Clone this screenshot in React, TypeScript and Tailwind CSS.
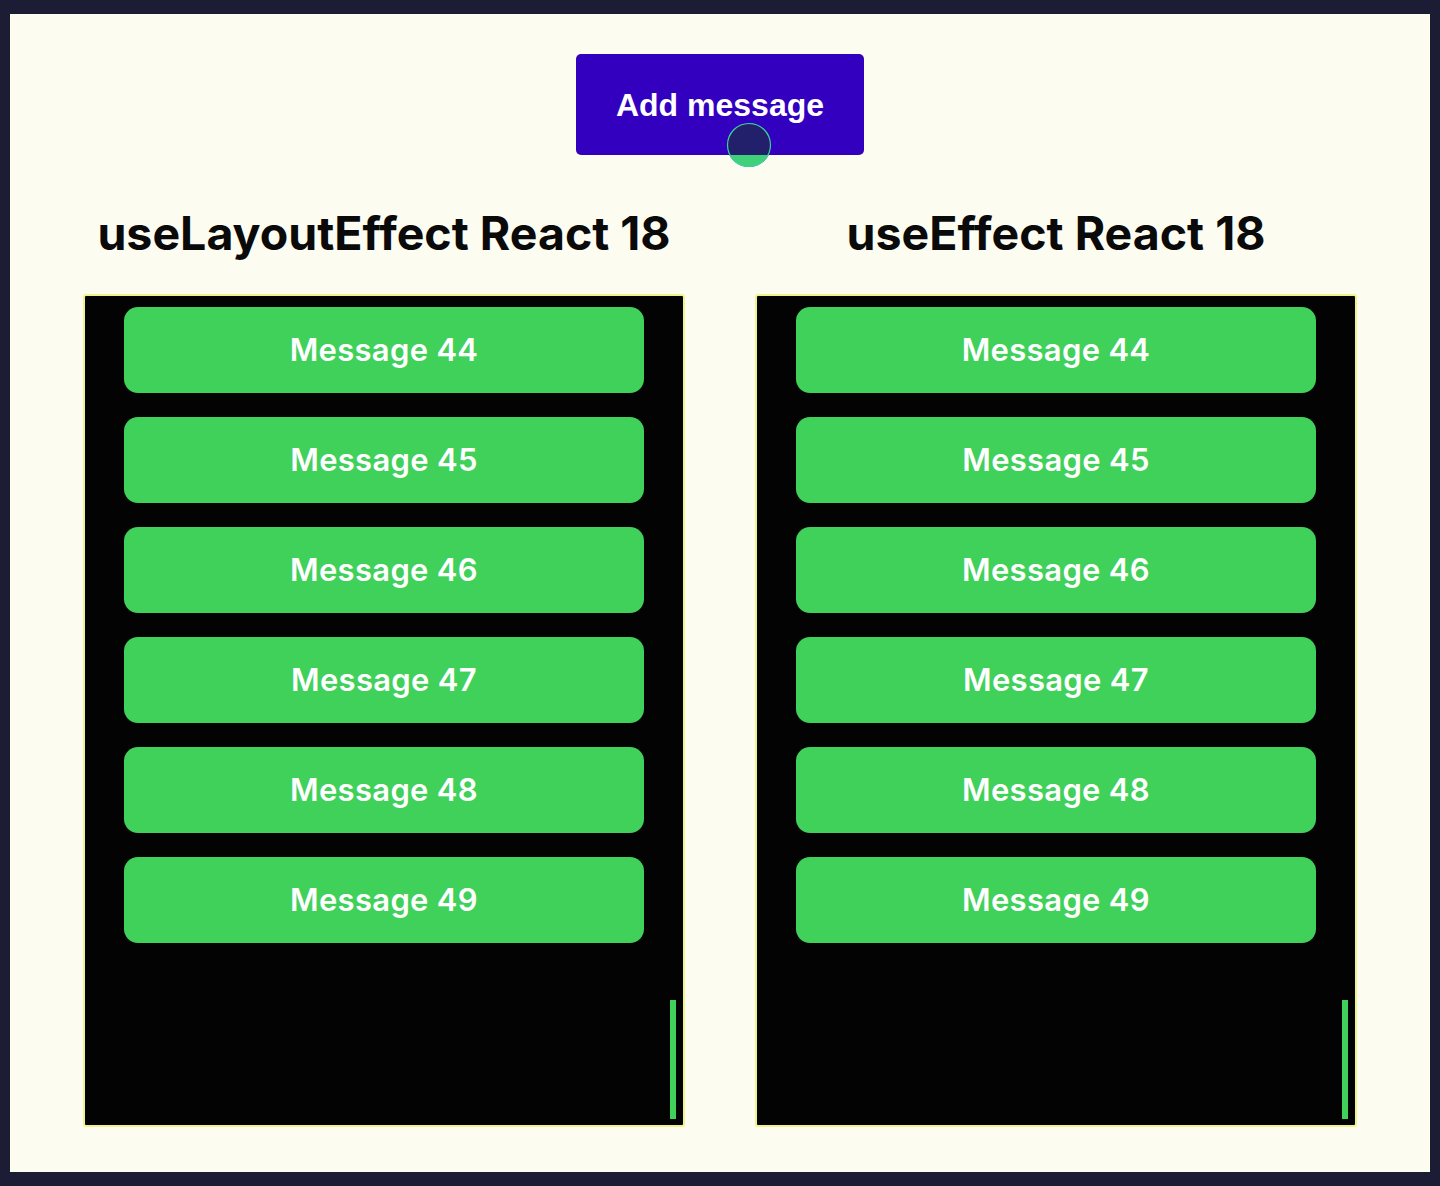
const messages = [44, 45, 46, 47, 48, 49];

function Panel({ title }: { title: string }) {
  return (
    <div className="flex flex-col items-center">
      <h2 className="mt-[48px] mb-[31px] h-[60px] text-[46.5px] leading-[60px] font-bold text-[#0a0a0a] font-['Inter',sans-serif] whitespace-nowrap">
        {title}
      </h2>
      <div className="relative w-[602px] h-[833px] bg-[#020302] border-2 border-[#f2f28a] rounded-[3px] pt-[11px]">
        <div className="flex flex-col items-center gap-[24px]">
          {messages.map((n) => (
            <div
              key={n}
              className="w-[520px] h-[86px] rounded-[14px] bg-[#3fd15a] flex items-center justify-center text-white text-[31px] tracking-[0.3px] font-semibold font-['Inter',sans-serif]"
            >
              Message {n}
            </div>
          ))}
        </div>
        {/* scrollbar thumb */}
        <div className="absolute right-[7px] top-[704px] w-[6px] h-[119px] bg-[#3fd15a]" />
      </div>
    </div>
  );
}

export default function App() {
  return (
    <div className="min-h-screen bg-[#1c1c34] pt-[14px] pb-[14px] px-[10px]">
      <div className="relative h-[1158px] bg-[#fcfcf1] flex flex-col items-center pt-[40px]">
        <button className="w-[288px] h-[101px] rounded-[5px] bg-[#3300bf] text-white text-[32px] font-bold font-['Liberation_Sans',Arial,sans-serif]">
          Add message
        </button>
        {/* click indicator */}
        <svg
          className="absolute left-[715px] top-[107px]"
          width="48"
          height="48"
          viewBox="0 0 48 48"
        >
          <defs>
            <clipPath id="c">
              <circle cx="24" cy="24" r="22" />
            </clipPath>
          </defs>
          <circle cx="24" cy="24" r="22" fill="#22206a" />
          <rect x="0" y="34" width="48" height="14" fill="#3fd078" clipPath="url(#c)" />
          <circle cx="24" cy="24" r="21.5" fill="none" stroke="#3fd0a0" strokeWidth="1.2" />
        </svg>
        <div className="flex gap-[70px]">
          <Panel title="useLayoutEffect React 18" />
          <Panel title="useEffect React 18" />
        </div>
      </div>
    </div>
  );
}
